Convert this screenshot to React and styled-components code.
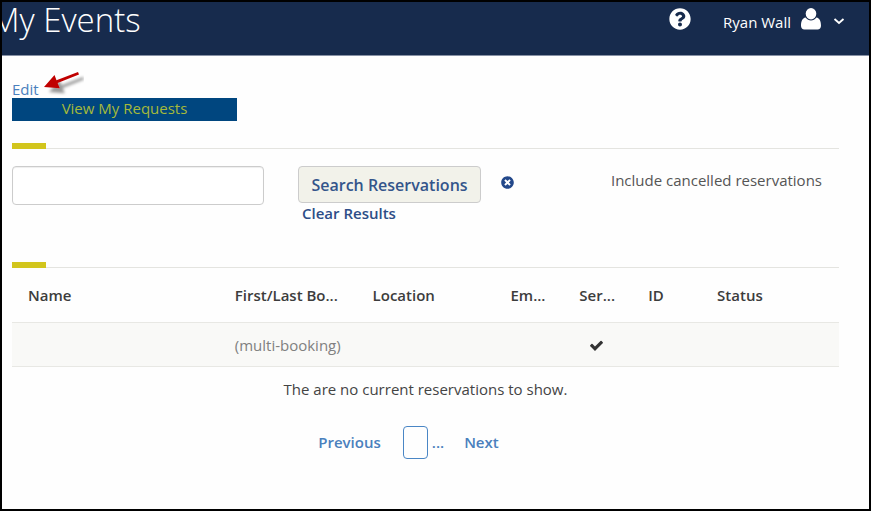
import React from "react";
import styled, { createGlobalStyle } from "styled-components";
import { FaQuestionCircle, FaTimesCircle } from "react-icons/fa";

const GlobalStyle = createGlobalStyle`
  * { box-sizing: border-box; }
  body {
    margin: 0;
    background: #fff;
    color: #555;
    font-family: "Open Sans", "Noto Sans", sans-serif;
    font-size: 15px;
    line-height: 20px;
  }
  button, input { font-family: inherit; }
`;

const Frame = styled.div`
  min-height: 100vh;
  border: 2px solid #000;
  background: #fefefe;
  overflow: hidden;
`;

const Header = styled.header`
  display: flex;
  justify-content: space-between;
  align-items: flex-start;
  height: 54px;
  padding-right: 22px;
  background: #172b4d;
  border-bottom: 1px solid #8791a5;
  color: #fff;
`;

const PageTitle = styled.h1`
  margin: 0 0 0 -11px;
  font-size: 33px;
  line-height: 36px;
  font-weight: 300;
`;

const HeaderTools = styled.div`
  display: flex;
  align-items: flex-start;
  gap: 32px;
`;

const HeaderButton = styled.button`
  display: flex;
  align-items: center;
  gap: 10px;
  height: 34px;
  padding: 0;
  border: 0;
  background: none;
  color: #fff;
  font-size: 15px;
  line-height: 24px;
  cursor: pointer;
`;

const UserName = styled.span`
  padding-top: 6px;
`;

const Content = styled.main`
  padding: 23px 30px 24px 10px;
`;

const TextLink = styled.a`
  color: #4a80bd;
  font-weight: ${(p) => (p.$strong ? 600 : 400)};
  text-decoration: none;
`;

const EditLine = styled.div`
  display: flex;
  align-items: flex-start;
  height: 19px;
`;

const ArrowMark = styled.svg`
  flex: none;
  margin: -8px 0 0 3px;
`;

const RequestsButton = styled.button`
  display: block;
  width: 225px;
  height: 23px;
  padding: 0 0 2px;
  border: 0;
  background: #00467f;
  color: #a5b93a;
  font-size: 15px;
  line-height: 21px;
  cursor: pointer;
`;

const SectionRule = styled.div`
  height: 6px;
  margin-top: ${(p) => p.$gap}px;
  border-bottom: 1px solid #e4e4e0;

  &::before {
    content: "";
    display: block;
    width: 34px;
    height: 6px;
    background: #d2c51c;
  }
`;

const SearchForm = styled.form`
  display: grid;
  grid-template-columns: minmax(0, 252fr) 197px 13px minmax(0, 305fr);
  column-gap: 20px;
  align-items: start;
  padding-top: 17px;
`;

const SearchInput = styled.input`
  width: 100%;
  height: 39px;
  padding: 6px 12px;
  border: 1px solid #ccc;
  border-radius: 4px;
  background: #fff;
  box-shadow: inset 0 1px 1px rgba(0, 0, 0, 0.07);
  font-size: 16px;
`;

const SearchActions = styled.div`
  display: flex;
  flex-direction: column;
  align-items: flex-start;
  padding-left: 14px;
`;

const SearchButton = styled.button`
  width: 100%;
  height: 37px;
  padding: 0;
  border: 1px solid #ccc;
  border-radius: 4px;
  background: #f2f2ea;
  color: #34558b;
  font-size: 16px;
  font-weight: 600;
  cursor: pointer;
`;

const ClearButton = styled.button`
  padding: 0 0 0 4px;
  border: 0;
  background: none;
  color: #2d4d87;
  font-size: 15px;
  line-height: 20px;
  font-weight: 600;
  cursor: pointer;
`;

const DismissButton = styled.button`
  display: flex;
  margin-top: 10px;
  padding: 0;
  border: 0;
  background: none;
  color: #23488a;
  cursor: pointer;
`;

const CancelledNote = styled.span`
  padding: 4px 17px 0 0;
  text-align: right;
`;

const ReservationTable = styled.table`
  width: 100%;
  table-layout: fixed;
  border-collapse: collapse;
`;

const HeadCell = styled.th`
  height: 54px;
  padding: 0 0 0 16px;
  color: #3c3c3c;
  font-weight: 600;
  text-align: left;
  white-space: nowrap;
`;

const BodyRow = styled.tr`
  background: #f9f9f7;
  border-top: 1px solid #e8e8e4;
  border-bottom: 1px solid #e8e8e4;
`;

const BodyCell = styled.td`
  height: 44px;
  padding: 2px 0 0 16px;
  color: #808080;
  white-space: nowrap;
`;

const CheckIcon = styled.svg`
  display: block;
  margin-left: 10px;
`;

const EmptyMessage = styled.p`
  margin: 12px 0 0;
  color: #444;
  text-align: center;
`;

const Pager = styled.nav`
  display: flex;
  justify-content: center;
  align-items: center;
  margin-top: 27px;
  padding-right: 34px;
`;

const PageBox = styled.a`
  width: 25px;
  height: 33px;
  margin: 0 4px 0 22px;
  border: 1px solid #4a86c5;
  border-radius: 4px;
`;

const NextLink = styled(TextLink)`
  margin-left: 20px;
`;

const columns = [
  { label: "Name", width: "25%" },
  { label: "First/Last Bo...", width: "16.67%" },
  { label: "Location", width: "16.67%" },
  { label: "Em...", width: "8.33%" },
  { label: "Ser...", width: "8.33%" },
  { label: "ID", width: "8.33%" },
  { label: "Status", width: "16.67%" },
];

function RedArrow() {
  return (
    <ArrowMark width="42" height="28" viewBox="0 0 42 28" aria-hidden="true">
      <defs>
        <filter id="arrow-shadow" x="-30%" y="-30%" width="180%" height="180%">
          <feDropShadow dx="5" dy="5" stdDeviation="1.6" floodColor="#000" floodOpacity="0.4" />
        </filter>
      </defs>
      <path
        d="M2 16 L12.500 4 L14.500 9.200 L36 1 L37 3.500 L15.600 12 L17.800 17.300 Z"
        fill="#c00000"
        filter="url(#arrow-shadow)"
      />
    </ArrowMark>
  );
}

function UserIcon() {
  return (
    <svg width="20" height="22" viewBox="0 0 20 22" fill="currentColor" aria-hidden="true">
      <ellipse cx="10" cy="5.700" rx="5.300" ry="5.700" />
      <path d="M4.600 9.600 C6 11.500 8 12.500 10 12.500 C12 12.500 14 11.500 15.400 9.600 C18.800 10.200 20 13.500 20 17.800 C20 20 18.600 21.500 16.600 21.500 H3.400 C1.400 21.500 0 20 0 17.800 C0 13.500 1.200 10.200 4.600 9.600 Z" />
    </svg>
  );
}

function ChevronIcon() {
  return (
    <svg width="16" height="16" viewBox="0 0 16 16" fill="none" stroke="currentColor" strokeWidth="1.800" aria-hidden="true">
      <path d="M3.500 8 L8 12 L12.500 8" />
    </svg>
  );
}

function ServiceCheck() {
  return (
    <CheckIcon width="15" height="15" viewBox="0 0 1792 1792" fill="#333" role="img" aria-label="Yes">
      <path d="M1671 566q0 40-28 68l-724 724-136 136q-28 28-68 28t-68-28l-136-136-362-362q-28-28-28-68t28-68l136-136q28-28 68-28t68 28l294 295 656-657q28-28 68-28t68 28l136 136q28 28 28 68z" />
    </CheckIcon>
  );
}

export default function App() {
  return (
    <Frame>
      <GlobalStyle />
      <Header>
        <PageTitle>My Events</PageTitle>
        <HeaderTools>
          <HeaderButton type="button" aria-label="Help">
            <FaQuestionCircle size={22} />
          </HeaderButton>
          <HeaderButton type="button">
            <UserName>Ryan Wall</UserName>
            <UserIcon />
            <ChevronIcon />
          </HeaderButton>
        </HeaderTools>
      </Header>
      <Content>
        <EditLine>
          <TextLink href="#edit">Edit</TextLink>
          <RedArrow />
        </EditLine>
        <RequestsButton type="button">View My Requests</RequestsButton>
        <SectionRule $gap={22} />
        <SearchForm onSubmit={(e) => e.preventDefault()}>
          <SearchInput type="text" aria-label="Search" />
          <SearchActions>
            <SearchButton type="submit">Search Reservations</SearchButton>
            <ClearButton type="reset">Clear Results</ClearButton>
          </SearchActions>
          <DismissButton type="button" aria-label="Clear search">
            <FaTimesCircle size={13} />
          </DismissButton>
          <CancelledNote>Include cancelled reservations</CancelledNote>
        </SearchForm>
        <SectionRule $gap={39} />
        <ReservationTable>
          <colgroup>
            {columns.map((c) => (
              <col key={c.label} width={c.width} />
            ))}
          </colgroup>
          <thead>
            <tr>
              {columns.map((c) => (
                <HeadCell key={c.label} scope="col">{c.label}</HeadCell>
              ))}
            </tr>
          </thead>
          <tbody>
            <BodyRow>
              <BodyCell />
              <BodyCell>(multi-booking)</BodyCell>
              <BodyCell />
              <BodyCell />
              <BodyCell><ServiceCheck /></BodyCell>
              <BodyCell />
              <BodyCell />
            </BodyRow>
          </tbody>
        </ReservationTable>
        <EmptyMessage>The are no current reservations to show.</EmptyMessage>
        <Pager aria-label="Pages">
          <TextLink $strong href="#previous">Previous</TextLink>
          <PageBox href="#page" aria-label="Current page" />
          <TextLink as="span" $strong>...</TextLink>
          <NextLink $strong href="#next">Next</NextLink>
        </Pager>
      </Content>
    </Frame>
  );
}
